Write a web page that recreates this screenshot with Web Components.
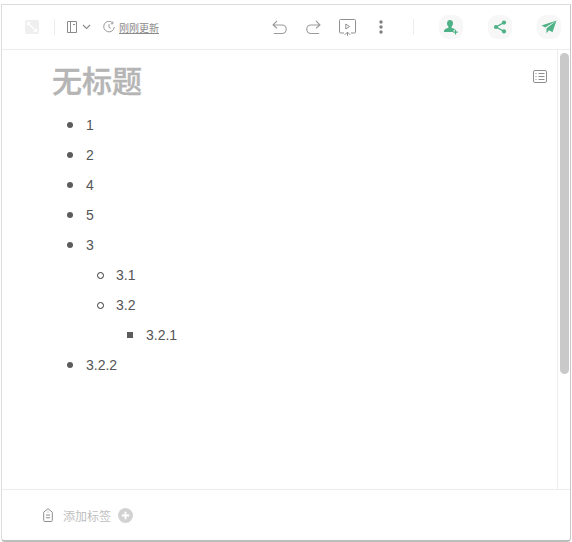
<!DOCTYPE html>
<html>
<head>
<meta charset="utf-8">
<style>
	html, body { margin: 0; padding: 0; background: #fff; }
	body { width: 572px; height: 542px; overflow: hidden; font-family: "Liberation Sans", "Noto Sans CJK SC", sans-serif; }
</style>
</head>
<body>
<note-window>
	<note-toolbar slot="toolbar"></note-toolbar>
	<note-editor slot="editor">
		<bullet-list>
			<bullet-item>1</bullet-item>
			<bullet-item>2</bullet-item>
			<bullet-item>4</bullet-item>
			<bullet-item>5</bullet-item>
			<bullet-item>3</bullet-item>
			<bullet-item level="2">3.1</bullet-item>
			<bullet-item level="2">3.2</bullet-item>
			<bullet-item level="3">3.2.1</bullet-item>
			<bullet-item>3.2.2</bullet-item>
		</bullet-list>
	</note-editor>
	<tag-bar slot="footer"></tag-bar>
</note-window>

<script>
class NoteWindow extends HTMLElement {
	constructor() {
		super();
		this.attachShadow({mode: 'open'}).innerHTML = `
			<style>
				:host {
					display: flex;
					flex-direction: column;
					box-sizing: border-box;
					width: 570px;
					height: 538px;
					margin: 4px 0 0 1px;
					border: 1px solid #dcdcdc;
					border-bottom: 2px solid #bdbdbd;
					border-right-color: #c8c8c8;
					border-radius: 0 0 4px 4px;
					background: #fff;
				}
				.main { flex: 1; min-height: 0; display: flex; }
			</style>
			<slot name="toolbar"></slot>
			<div class="main"><slot name="editor"></slot></div>
			<slot name="footer"></slot>
		`;
	}
}

class NoteToolbar extends HTMLElement {
	constructor() {
		super();
		this.attachShadow({mode: 'open'}).innerHTML = `
			<style>
				:host {
					display: flex;
					align-items: center;
					box-sizing: border-box;
					height: 45px;
					flex: none;
					border-bottom: 1px solid #ececec;
					padding-left: 23px;
					color: #9b9b9b;
				}
				svg { display: block; flex: none; fill: none; stroke: currentColor; }
				.expand { width: 14px; height: 14px; margin-right: 15px; background: #efefef; border-radius: 2px; }
				.expand svg { stroke: #fff; }
				.sep { width: 1px; height: 16px; background: #ececec; flex: none; }
				.time { font-size: 10px; color: #8a8a8a; text-decoration: underline; margin-left: 4px; white-space: nowrap; }
				.round { width: 24px; height: 24px; border-radius: 9px; background: #f7f7f7; display: flex; align-items: center; justify-content: center; flex: none; }
				.round svg { stroke: none; fill: #4fb287; }
			</style>
			<div class="expand"><svg width="14" height="14" viewBox="0 0 14 14" stroke-width="1.2"><path d="M2.5 2.5l9 9M2.5 2.5h3M2.5 2.5v3M11.5 11.5h-3M11.5 11.5v-3"/></svg></div>
			<div class="sep"></div>
			<svg style="margin-left:12px" width="10" height="12" viewBox="0 0 10 12"><path d="M.5.5h9v11H.5zM3.500 .5v11M6 3.500h2" stroke="#8a8a8a"/></svg>
			<svg style="margin-left:5px" width="9" height="6" viewBox="0 0 9 6"><path d="M1 1l3.500 3.500L8 1" stroke="#8a8a8a" stroke-width="1.100"/></svg>
			<svg style="margin-left:12px" width="12" height="12" viewBox="0 0 12 12"><path d="M9.500 1.600A5.300 5.300 0 1 0 11.300 6M9.800 .6v2.200H7.700M6 3.200V6.300l1.800 1.100" stroke="#8f8f8f" stroke-width=".9"/></svg>
			<span class="time">刚刚更新</span>
			<svg style="margin-left:113px" width="15" height="16" viewBox="0 0 15 16"><path d="M1.500 6H10a4 4 0 0 1 0 8.500H1.800M5 1.800L1 6l4 3.200" stroke-width="1.100"/></svg>
			<svg style="margin-left:19px" width="15" height="16" viewBox="0 0 15 16"><path d="M13.500 6H5a4 4 0 0 0 0 8.500h8.200M10 1.800L14 6l-4 3.200" stroke-width="1.100"/></svg>
			<svg style="margin-left:18px" width="17" height="17" viewBox="0 0 17 17"><path d="M5 14H1.500a1 1 0 0 1-1-1V1.500a1 1 0 0 1 1-1h14a1 1 0 0 1 1 1V13a1 1 0 0 1-1 1H12M6.800 5v5l3.700-2.500zM5.800 15.800l2.700-2.700 2.700 2.700M8.500 13.300v3.500" stroke="#8f8f8f"/></svg>
			<svg style="margin-left:23px" width="4" height="14" viewBox="0 0 4 14"><g fill="#808080" stroke="none"><circle cx="2" cy="2" r="1.700"/><circle cx="2" cy="7" r="1.700"/><circle cx="2" cy="12" r="1.700"/></g></svg>
			<div class="sep" style="margin-left:30px"></div>
			<div class="round" style="margin-left:25px"><svg width="16" height="16" viewBox="0 0 16 16"><path d="M7 1c2 0 3 1.500 3 3.300 0 1.500-.6 2.700-1.400 3.400v1.100c1.500.5 2.800 1 3.400 1.700-1.200.6-1.800 1.500-1.900 2.500H1c-.2-2 .5-3 3-3.800l1.400-.5V7.700C4.600 7 4 5.800 4 4.300 4 2.500 5 1 7 1z"/><path d="M12.500 10.800v4.700M10.200 13.200h4.600" stroke="#4fb287" stroke-width="1.200" fill="none"/></svg></div>
			<div class="round" style="margin-left:25px"><svg width="14" height="14" viewBox="0 0 14 14"><circle cx="11" cy="2.600" r="2.100"/><circle cx="11" cy="11.400" r="2.100"/><circle cx="3" cy="7" r="2.100"/><path d="M11 2.600L3 7l8 4.400" fill="none" stroke="#4fb287" stroke-width="1.300"/></svg></div>
			<div class="round" style="margin-left:25px"><svg width="16" height="14" viewBox="0 0 16 14"><path d="M15.500.5L.5 5.400l3.700 2.200L15.500.5zM15.500.5L5.500 8.500v4.700l2.500-3 3.500 2L15.500.5z"/></svg></div>
		`;
	}
}

class NoteEditor extends HTMLElement {
	constructor() {
		super();
		this.attachShadow({mode: 'open'}).innerHTML = `
			<style>
				:host { display: flex; flex: 1; width: 568px; min-height: 0; }
				.doc { position: relative; flex: 1; border-right: 1px solid #ececec; padding: 14px 0 0 50px; box-sizing: border-box; }
				h1 { margin: 0 0 10px; font-size: 30px; line-height: 36px; font-weight: 500; color: #b5b5b5; -webkit-text-stroke: .4px #b5b5b5; }
				.outline { position: absolute; top: 20px; right: 10px; display: block; }
				.rail { width: 12px; flex: none; position: relative; padding: 0 0 0 1px; box-sizing: border-box; }
				.thumb { width: 9px; height: 321px; background: #c9c9c9; border-radius: 5px; margin: 3px 0 0 1px; }
			</style>
			<div class="doc">
				<h1>无标题</h1>
				<svg class="outline" width="14" height="13" viewBox="0 0 14 13" fill="none" stroke="#8f8f8f"><rect x=".5" y=".5" width="13" height="12" rx="1.500"/><path d="M5.500 3.500h6M5.500 6.500h6M5.500 9.500h6M2.500 3.500h1M2.500 6.500h1M2.500 9.500h1"/></svg>
				<slot></slot>
			</div>
			<div class="rail"><div class="thumb"></div></div>
		`;
	}
}

class BulletList extends HTMLElement {
	constructor() {
		super();
		this.attachShadow({mode: 'open'}).innerHTML = `
			<style>:host { display: block; }</style>
			<slot></slot>
		`;
	}
}

class BulletItem extends HTMLElement {
	constructor() {
		super();
		const level = Number(this.getAttribute('level') || 1);
		this.attachShadow({mode: 'open'}).innerHTML = `
			<style>
				:host { display: flex; align-items: center; height: 30px; font-size: 14px; color: #555; padding-left: ${15 + (level - 1) * 30}px; }
				.mark { box-sizing: border-box; width: 6px; height: 6px; margin-right: 13px; flex: none; background: #5c5c5c; border-radius: 50%; }
				.l2 { width: 7px; height: 7px; margin-right: 12px; background: #fff; border: 1px solid #333; }
				.l3 { border-radius: 0; }
			</style>
			<span class="mark l${level}"></span><slot></slot>
		`;
	}
}

class TagBar extends HTMLElement {
	constructor() {
		super();
		this.attachShadow({mode: 'open'}).innerHTML = `
			<style>
				:host {
					display: flex;
					align-items: center;
					flex: none;
					box-sizing: border-box;
					height: 51px;
					border-top: 1px solid #ececec;
					padding-left: 41px;
					font-size: 12px;
					color: #c0c0c0;
				}
				span { margin-left: 10px; }
				.add { margin-left: 7px; display: block; }
			</style>
			<svg width="10" height="14" viewBox="0 0 10 14" fill="none" stroke="#8f8f8f"><path d="M5 .7L9.300 4.200v8.300a1 1 0 0 1-1 1H1.700a1 1 0 0 1-1-1V4.200zM3 7h4M3 9.800h4M4.500 4h1"/></svg>
			<span>添加标签</span>
			<svg class="add" width="15" height="15" viewBox="0 0 15 15"><circle cx="7.500" cy="7.500" r="7.500" fill="#d2d2d2"/><path d="M7.500 3.800v7.400M3.800 7.500h7.400" stroke="#fff" stroke-width="1.800"/></svg>
		`;
	}
}

customElements.define('note-window', NoteWindow);
customElements.define('note-toolbar', NoteToolbar);
customElements.define('note-editor', NoteEditor);
customElements.define('bullet-list', BulletList);
customElements.define('bullet-item', BulletItem);
customElements.define('tag-bar', TagBar);
</script>
</body>
</html>
